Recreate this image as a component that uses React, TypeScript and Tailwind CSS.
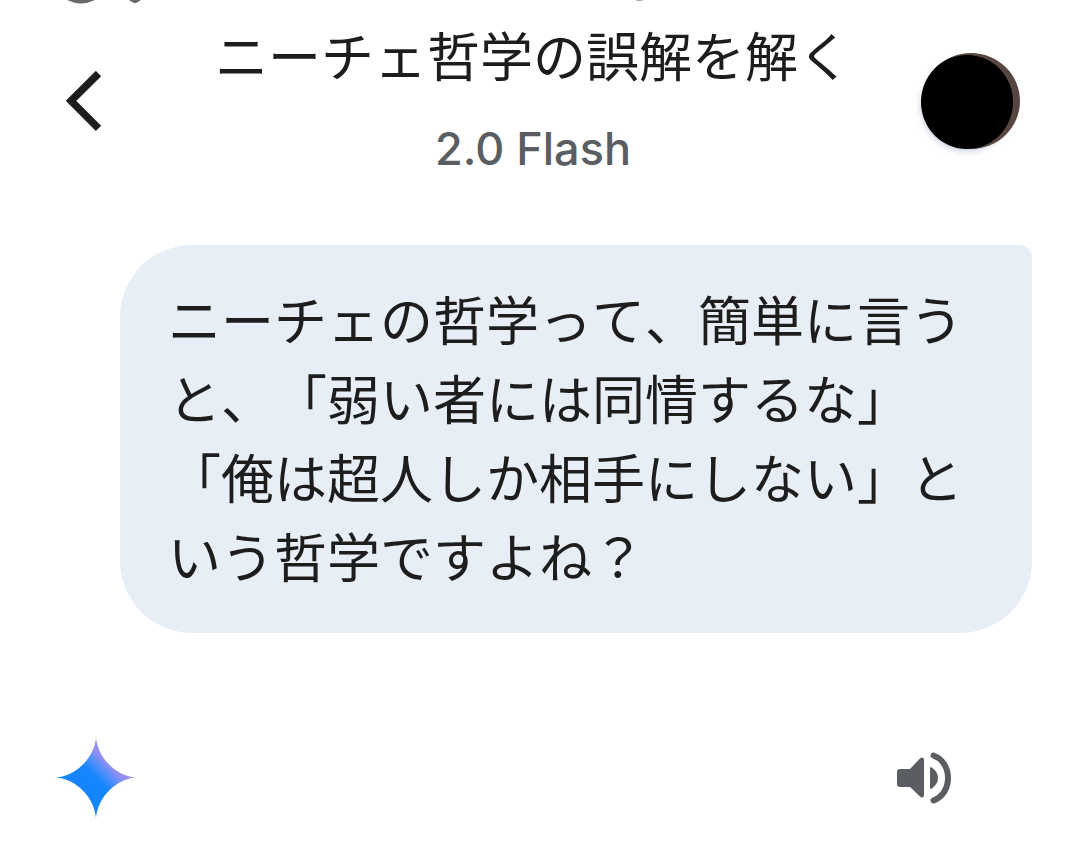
import React from 'react';

const MODEL_NAME = '2.0 Flash';

const conversation = {
    title: 'ニーチェ哲学の誤解を解く',
    prompt: 'ニーチェの哲学って、簡単に言うと、「弱い者には同情するな」「俺は超人しか相手にしない」という哲学ですよね？',
};

/** Bottom edge of the status bar icons, mostly scrolled out of view. */
function StatusBarEdge() {
    return (
        <svg className="block h-1 w-full" aria-hidden="true">
            <path d="M67 0H95Q88 3.4 81 3.4T67 0Z" fill="#69696d" />
            <path d="M129 0H141L137 2.6Q135 3.6 133 2.6Z" fill="#69696d" />
            <path d="M636 0H643L641 1H637Z" fill="#a5a5b2" />
        </svg>
    );
}

function BackIcon() {
    return (
        <svg width="36" height="60" viewBox="0 0 36 60" fill="none" aria-hidden="true">
            <path d="M32.5 2.5L5 29.8L32.5 57.3" stroke="#1c1d1c" strokeWidth="7.5" />
        </svg>
    );
}

function Avatar() {
    return (
        <svg width="112" height="112" viewBox="0 0 112 112" aria-hidden="true">
            <defs>
                <filter id="avatar-shadow" x="-20%" y="-20%" width="140%" height="140%">
                    <feGaussianBlur stdDeviation="3" />
                </filter>
            </defs>
            <ellipse cx="53" cy="60" rx="46" ry="46" fill="#b4bdd6" opacity="0.8" filter="url(#avatar-shadow)" />
            <ellipse cx="57" cy="56" rx="49" ry="48" fill="#57463f" />
            <ellipse cx="53" cy="57" rx="46" ry="47" fill="#000" />
        </svg>
    );
}

function SparkIcon() {
    return (
        <svg width="80" height="80" viewBox="0 0 80 80" role="img" aria-label="Gemini">
            <defs>
                <linearGradient id="spark" x1="24" y1="56" x2="60" y2="20" gradientUnits="userSpaceOnUse">
                    <stop offset="0.45" stopColor="#1685fc" />
                    <stop offset="0.65" stopColor="#5490fa" />
                    <stop offset="0.82" stopColor="#9590f0" />
                </linearGradient>
            </defs>
            <path d="M40 0C42 20 60 38 80 39.5C60 41 42 59 40 80C38 59 20 41 0 39.5C20 38 38 20 40 0Z" fill="url(#spark)" />
        </svg>
    );
}

function SpeakerIcon() {
    return (
        <svg width="56" height="52" viewBox="0 0 56 52" fill="none" aria-hidden="true">
            <path
                d="M4 17H14L24 6.5C26 4.8 28 5.5 28 8V43C28 45.5 26 46.2 24 44.5L14 35H4Q1 35 1 32V20Q1 17 4 17Z"
                fill="#5a5d61"
            />
            <path d="M34 15.5Q35.5 14.5 37 16.5Q42 20.5 42 26T37 35.5Q35.5 37.5 34 36.5Z" fill="#5a5d61" />
            <path d="M37.5 3.5C47 7 52 16 52 26S47 45 37.5 48.5" stroke="#5a5d61" strokeWidth="6" strokeLinecap="round" />
        </svg>
    );
}

export default function App() {
    return (
        <div className="bg-white font-['Noto_Sans_CJK_JP',sans-serif] text-[#1c1d1c]">
            <StatusBarEdge />

            <header className="flex items-center justify-between pr-[54px] pl-[66px] pt-[14px]">
                <button type="button" aria-label="Back" className="flex w-[86px] items-center py-6">
                    <BackIcon />
                </button>
                <div className="text-center">
                    <h1 className="text-[53px] leading-[72px] font-normal">{conversation.title}</h1>
                    <p className="pt-6 font-['Inter',sans-serif] text-[45px] leading-[70px] font-medium text-[#5a5d61]">
                        {MODEL_NAME}
                    </p>
                </div>
                <button type="button" aria-label="Account">
                    <Avatar />
                </button>
            </header>

            <main className="pt-[61px]">
                <div className="mr-12 ml-[120px] rounded-[72px] rounded-tr-[12px] bg-[#e8eef6] px-12 pt-[34px] pb-[38px]">
                    <p className="text-[53px] leading-[79px] [font-kerning:none] [text-spacing-trim:space-all]">
                        {conversation.prompt}
                    </p>
                </div>

                <div className="flex items-center justify-between pt-[105px] pr-32 pb-12 pl-14">
                    <SparkIcon />
                    <button type="button" aria-label="Read aloud">
                        <SpeakerIcon />
                    </button>
                </div>
            </main>
        </div>
    );
}
